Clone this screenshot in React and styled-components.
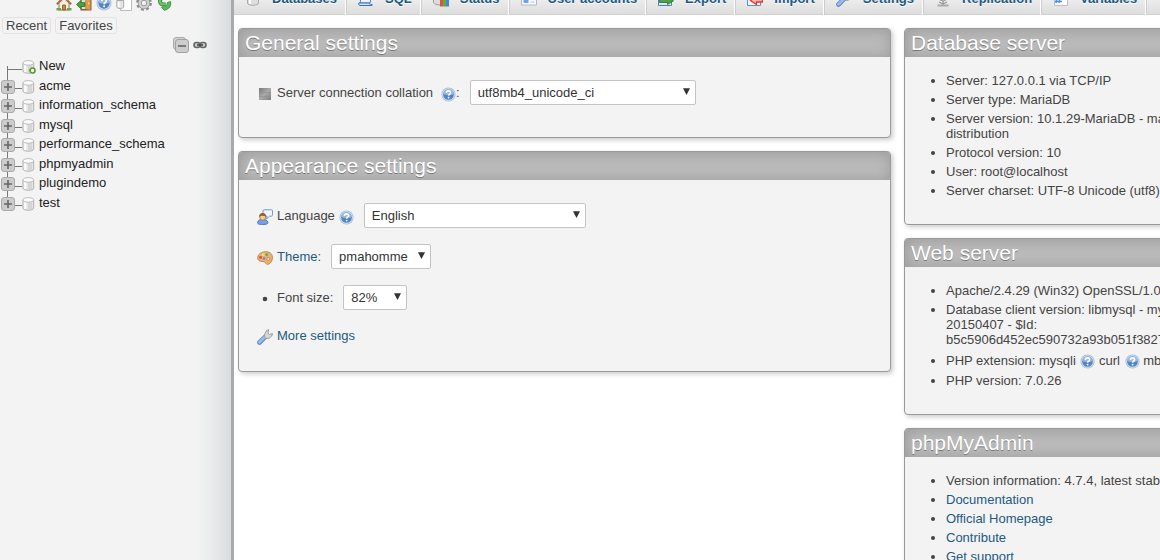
import React, { useState } from "react";
import styled, { createGlobalStyle } from "styled-components";

// ================= Global =================

const GlobalStyle = createGlobalStyle`
  * {
    box-sizing: border-box;
  }

  body {
    margin: 0;
    background: #fff;
    color: #444;
    font-family: "Liberation Sans", Arial, sans-serif;
    font-size: 13px;
    line-height: 15px;
  }

  a {
    color: #235a81;
    text-decoration: none;
  }

  a:hover {
    text-decoration: underline;
  }

  svg {
    display: block;
    flex: none;
  }
`;

// ================= Layout =================

const Page = styled.div`
  display: flex;
  height: 100vh;
  overflow: hidden;
`;

const Sidebar = styled.aside`
  flex: 0 0 234px;
  border-right: 3px solid #aaa;
  background: linear-gradient(to right, #f3f3f3 84%, #eeefef 89%, #e3e5e7 95%, #d9dbdd 100%);
`;

const Main = styled.main`
  flex: 1;
  min-width: 0;
  overflow: hidden;
`;

const Columns = styled.div`
  display: flex;
  gap: 13px;
  padding: 13px 0 0 4px;
`;

const SettingsColumn = styled.div`
  flex: 1;
  min-width: 0;
`;

/* The info panels run on past the right edge of the window */
const InfoColumn = styled.div`
  flex: 0 0 404px;
  margin-right: -148px;
`;

// ================= Sidebar =================

const IconBar = styled.div`
  display: flex;
  align-items: flex-end;
  gap: 4px;
  height: 11px;
  padding-left: 56px;
  overflow: hidden;
`;

const IconLink = styled.a`
  display: block;
`;

const QuickLists = styled.div`
  display: flex;
  gap: 4px;
  padding: 6px 0 0 2px;
`;

const QuickButton = styled.button`
  height: 17px;
  padding: 0 3px;
  border: 1px solid #e2e2e2;
  border-radius: 3px;
  background: #f3f3f3;
  color: #444;
  font: inherit;
  cursor: pointer;
`;

const TreeTools = styled.div`
  display: flex;
  justify-content: flex-end;
  align-items: center;
  gap: 4px;
  padding: 3px 24px 0 0;
`;

const PlainButton = styled.button`
  display: block;
  padding: 0;
  border: 0;
  background: none;
  cursor: pointer;
`;

const Tree = styled.ul`
  margin: 0;
  padding: 3px 0 0;
  list-style: none;
  line-height: 1.5;
`;

const TreeRow = styled.li`
  display: flex;
  align-items: center;
  background: linear-gradient(#777, #777) no-repeat 7px
    ${({ $first }) => ($first ? "100% / 1px 50%" : "0 / 1px 100%")};

  &:last-child {
    background-size: 1px 50%;
  }
`;

const Branch = styled.div`
  display: flex;
  align-items: center;
  justify-content: flex-end;
  width: 22px;
  padding-top: 3px;
`;

const Twig = styled.span`
  flex: 1;
  margin-top: 4px;
  margin-left: ${({ $first }) => ($first ? "7px" : "0")};
  border-top: 1px solid #777;
`;

const NodeIcon = styled.span`
  padding-top: 3px;
`;

const TreeLink = styled.a`
  margin-left: 3px;
  color: #222;
`;

// ================= Top menu =================

const TopMenu = styled.nav`
  display: flex;
  align-items: flex-end;
  height: 15px;
  overflow: hidden;
`;

const Tab = styled.a`
  display: flex;
  flex: none;
  align-items: center;
  gap: 11px;
  padding: 9px 8px 8px 11px;
  border-left: 1px solid #ccc;
  border-right: 1px solid #fff;
  background: linear-gradient(#fff, #dcdcdc);
  box-shadow: inset 0 -1px 0 #d2d2d2;
  font-weight: bold;
  line-height: 16px;
  text-shadow: 0 1px 0 #fff;
  white-space: nowrap;

  &:first-child {
    border-left: 0;
  }
`;

// ================= Panels =================

const Panel = styled.section`
  margin-bottom: 13px;
  border: 1px solid #999;
  border-radius: 4px;
  background: #f3f3f3;
  box-shadow: 2px 2px 5px #ccc;
`;

const PanelTitle = styled.h2`
  margin: 0;
  padding: 2px 6px;
  border-radius: 3px 3px 0 0;
  background: #bbb;
  box-shadow: 1px 1px 15px #999 inset;
  color: #fff;
  font-size: 21px;
  font-weight: normal;
  line-height: 24px;
  text-shadow: 0 1px 0 #777;
`;

const SettingsList = styled.ul`
  display: flex;
  flex-direction: column;
  gap: 16px;
  margin: 0;
  padding: ${({ $tall }) => ($tall ? "23px 18px 26px" : "23px 18px 32px")};
  list-style: none;
`;

const Setting = styled.li`
  display: flex;
  align-items: center;
  min-height: ${({ $plain }) => ($plain ? "18px" : "25px")};
`;

const SettingIcon = styled.span`
  display: flex;
  justify-content: center;
  width: 16px;
  margin-right: 4px;
  padding-top: 3px;
`;

const HelpLink = styled.a`
  display: ${({ $inline }) => ($inline ? "inline-block" : "block")};
  margin: ${({ $inline, $wide }) => ($inline ? "0 0 0 1px" : $wide ? "0 0 0 8px" : "0 0 0 4px")};
  padding-top: 3px;
  vertical-align: -4px;
`;

const SelectBox = styled.span`
  position: relative;
  width: ${({ $width }) => $width}px;
  margin-left: 10px;

  svg {
    position: absolute;
    top: 8px;
    right: 6px;
    pointer-events: none;
  }
`;

const Select = styled.select`
  display: block;
  width: 100%;
  height: 25px;
  padding: 0 18px 0 7px;
  border: 1px solid #c4c4c4;
  border-radius: 2px;
  appearance: none;
  background: #fff;
  color: #333;
  font: inherit;
`;

const InfoList = styled.ul`
  margin: 0;
  padding: 16px 12px 22px 41px;

  li {
    padding-bottom: 4px;
    overflow-wrap: break-word;
  }
`;

// ================= Icons =================

const HelpIcon = ({ size = 15 }) => (
  <svg width={size} height={size} viewBox="0 0 16 16">
    <circle cx="8" cy="8" r="7.500" fill="#9fbade" />
    <circle cx="8" cy="8" r="6.700" fill="#d3e0f0" />
    <circle cx="8" cy="8" r="5.700" fill="#5485c2" />
    <path d="M2.500 7.500a5.500 5.500 0 0 1 11 0c-3 1.500-8 1.500-11 0z" fill="#9ab8de" />
    <path d="M5.700 6.300c.2-3 4.800-2.800 4.500-.1C10 7.600 8.200 7.700 8.100 9.200" fill="none" stroke="#fff" strokeWidth="1.700" />
    <circle cx="8.100" cy="11.300" r="1" fill="#fff" />
  </svg>
);

const HomeIcon = () => (
  <svg width="16" height="16" viewBox="0 0 16 16">
    <path d="M3 7.500L8 3l5 4.500V15H3z" fill="#f4efe4" stroke="#8c7a60" />
    <path d="M.8 9.300L8 2.200l7.200 7.100" fill="none" stroke="#b06a40" strokeWidth="2" />
    <path d="M6.500 10h3v5h-3z" fill="#c9873f" stroke="#7d4b1c" strokeWidth=".7" />
    <path d="M.5 14.300h4.500M11 14.300h4.500" stroke="#6ba545" strokeWidth="2.600" />
  </svg>
);

const ExitIcon = () => (
  <svg width="16" height="16" viewBox="0 0 16 16">
    <path d="M4.500.5h11v15h-11z" fill="#8b5a2b" />
    <path d="M5.500 2h4v12h-4z" fill="#d8e2d0" />
    <path d="M9.500 2.500l5-1.500v14l-5-1z" fill="#dd9a50" />
    <circle cx="12.800" cy="8.500" r=".9" fill="#f7e27c" />
    <path d="M.5 9.500L5 5.500v2.200h4v3.800H5v2.300z" fill="#4ba046" stroke="#2d6e2c" strokeWidth=".8" />
  </svg>
);

const DocsIcon = () => (
  <svg width="16" height="16" viewBox="0 0 16 16">
    <path d="M4.500.5h11v15h-11z" fill="#fdfdfd" stroke="#bbb" />
    <path d="M.8 5.500h6.900v6.500c0 1.900-6.900 1.900-6.900 0z" fill="#e5e5e5" stroke="#aaa" />
    <path d="M2.700 7v5" stroke="#fff" strokeWidth="1.600" />
  </svg>
);

const GearIcon = () => (
  <svg width="16" height="16" viewBox="0 0 16 16">
    <circle cx="8" cy="8" r="6.500" fill="none" stroke="#8b8b8b" strokeWidth="2.800" strokeDasharray="2.700 2.400" />
    <circle cx="8" cy="8" r="4.200" fill="none" stroke="#8f8f8f" strokeWidth="4" />
    <circle cx="8" cy="8" r="4.200" fill="none" stroke="#cfcfcf" strokeWidth="2.600" />
  </svg>
);

const ReloadIcon = () => (
  <svg width="16" height="16" viewBox="0 0 16 16">
    <path d="M12 3C7 1.500 3.300 4 4 7s4 2.600 6 2.300" fill="none" stroke="#3c8f3d" strokeWidth="3.800" />
    <path d="M12 3C7 1.500 3.300 4 4 7s4 2.600 6 2.300" fill="none" stroke="#74c46c" strokeWidth="2" />
    <path d="M14.500 6.500c1 4-1 7.500-6 8.800L5.500 12.500 8 10.500l1 1.200c1.500-.7 2.300-2 2.200-4z" fill="#5fb85a" stroke="#3c8f3d" strokeWidth=".9" />
  </svg>
);

const CollapseIcon = () => (
  <svg width="16" height="16" viewBox="0 0 16 16">
    <rect x=".5" y=".5" width="12" height="12" rx="2.500" fill="#d2d2d2" stroke="#aaa" />
    <rect x="2.500" y="2.500" width="13" height="13" rx="2.500" fill="#ccc" stroke="#a2a2a2" />
    <path d="M5 9h8" stroke="#555" strokeWidth="1.400" />
  </svg>
);

const LinkIcon = () => (
  <svg width="14" height="16" viewBox="0 0 14 16">
    <rect x="1" y="5.500" width="6" height="5" rx="2.500" fill="#ccc" stroke="#666" strokeWidth="1.600" />
    <rect x="7" y="5.500" width="6" height="5" rx="2.500" fill="#ccc" stroke="#666" strokeWidth="1.600" />
    <path d="M4 8h6" stroke="#444" strokeWidth="1.600" />
  </svg>
);

const PlusIcon = () => (
  <svg width="15" height="14" viewBox="0 0 15 14">
    <rect x="1.500" y=".5" width="13" height="13" rx="2.500" fill="#ccc" stroke="#aaa" />
    <path d="M4 7h8M8 3v8" stroke="#666" strokeWidth="1.600" />
  </svg>
);

const DatabaseIcon = ({ isNew }) => (
  <svg width="14" height="14" viewBox="0 0 14 14">
    <path d="M.9 3v8c0 3 10.800 3 10.800 0V3" fill="#e4e4e4" stroke="#b4b4b4" />
    <path d="M3.300 5v7" stroke="#fff" strokeWidth="2" />
    <path d="M7 5.500v7M9 5.500v6.500" stroke="#c8c8c8" />
    <ellipse cx="6.300" cy="2.900" rx="5.400" ry="2.300" fill="#fafafa" stroke="#bbb" />
    {isNew && <circle cx="10.500" cy="10.500" r="2.500" fill="#fff" stroke="#579c34" strokeWidth="1.700" />}
  </svg>
);

const DatabasesIcon = () => (
  <svg width="16" height="16" viewBox="0 0 16 16">
    <path d="M2.500 3v9c0 3 11 3 11 0V3" fill="#dedede" stroke="#aaa" />
    <path d="M5 5v8" stroke="#fff" strokeWidth="2" />
    <ellipse cx="8" cy="3" rx="5.500" ry="2.300" fill="#fafafa" stroke="#b0b0b0" />
  </svg>
);

const SqlIcon = () => (
  <svg width="16" height="16" viewBox="0 0 16 16">
    <path d="M4.500 1h10l-2.500 11h-10z" fill="#eef4fc" stroke="#5680bd" />
    <path d="M.8 12h10.700c.5 2 1.500 2.500 2.500 1v1.500H2C1 14.500.5 13.500.8 12z" fill="#d5e4f7" stroke="#3f6fb4" />
    <path d="M6 5h6M5 8h6" stroke="#8aa9d6" />
  </svg>
);

const StatusIcon = () => (
  <svg width="16" height="16" viewBox="0 0 16 16">
    <path d="M.5 3v8.500c1 2 4 2.500 7 2.500V3z" fill="#ddd" stroke="#999" />
    <path d="M7 9h3v6.500H7z" fill="#e2533f" />
    <path d="M10 5h3v10.500h-3z" fill="#57b045" />
    <path d="M13 7h3v8.500h-3z" fill="#4b82d8" />
  </svg>
);

const UsersIcon = () => (
  <svg width="16" height="16" viewBox="0 0 16 16">
    <path d="M.5 3.500h15v10.500H.5z" fill="#f8fbff" stroke="#b0b8c4" />
    <path d="M2.500 7h5v5h-5z" fill="#6ea3e6" />
    <path d="M9.500 8h4M9.500 11h4" stroke="#b8c4d4" />
  </svg>
);

const ExportIcon = () => (
  <svg width="16" height="16" viewBox="0 0 16 16">
    <path d="M.5 2.500h13v12H.5z" fill="#dbe8f9" stroke="#4f7fc4" />
    <path d="M1.500 8.500h8V5.500l6 4.300-6 3.700v-2h-8z" fill="#4ca345" stroke="#276d2a" strokeWidth=".8" />
  </svg>
);

const ImportIcon = () => (
  <svg width="16" height="16" viewBox="0 0 16 16">
    <path d="M.5 3.500h13v11H.5z" fill="#f4f8fe" stroke="#5b8fd6" />
    <path d="M15.500 7v4H9.500v2.500l-6-4 6-4.500v2z" fill="#f8b3aa" stroke="#de3a32" strokeWidth="1.300" />
  </svg>
);

const WrenchIcon = () => (
  <svg width="16" height="16" viewBox="0 0 16 16">
    <path d="M2.500 13.500L8.700 7.300" stroke="#5e88c9" strokeWidth="4.600" strokeLinecap="round" />
    <path d="M2.500 13.300L8.500 7.300" stroke="#9cbcec" strokeWidth="2.800" strokeLinecap="round" />
    <path d="M7.800 8.300L7.500 5.300 9.500 1.500l2.200-.8-.7 3.600 1.500 1.200 3-1-.7 2.500-2.600 2.300-3.200.2z" fill="#d6d6d6" stroke="#999" strokeWidth=".9" />
  </svg>
);

const ReplicationIcon = () => (
  <svg width="16" height="16" viewBox="0 0 16 16">
    <circle cx="8" cy="6" r="4" fill="#ddd" stroke="#999" />
    <path d="M8 10v4M4 11l4 2 4-2" fill="none" stroke="#888" />
    <path d="M2.500 14.500h11" stroke="#aaa" strokeWidth="2" />
  </svg>
);

const VariablesIcon = () => (
  <svg width="16" height="16" viewBox="0 0 16 16">
    <path d="M1.500 1.500h13v13h-13z" fill="#fdfdff" stroke="#b9bec8" />
    <path d="M2 10.500h7M4 7l-1 5M7 7l-1 5" stroke="#5b8be0" strokeWidth="1.500" />
  </svg>
);

const MoreIcon = () => (
  <svg width="16" height="16" viewBox="0 0 16 16">
    <path d="M2 8h10v2L8 14H6L2 10z" fill="#333" />
  </svg>
);

const CollationIcon = () => (
  <svg width="12" height="12" viewBox="0 0 12 12">
    <defs>
      <linearGradient id="collation-fill" x2="1" y2="1">
        <stop offset="0" stopColor="#777" />
        <stop offset=".5" stopColor="#aaa" />
        <stop offset="1" stopColor="#7c7c7c" />
      </linearGradient>
    </defs>
    <rect width="12" height="12" fill="url(#collation-fill)" />
    <path d="M0 4.500h12M0 8.500h12" stroke="#8e8e8e" strokeWidth=".6" />
  </svg>
);

const LanguageIcon = () => (
  <svg width="16" height="16" viewBox="0 0 16 16">
    <path d="M7 .8h7.500c1 0 1 .5 1 1v4c0 1-.5 1.400-1.500 1.400h-1.500L9.500 10 10 7.200H7c-.5 0-1-.5-1-1V1.800c0-.7.500-1 1-1z" fill="#eef5fd" stroke="#6e99d3" />
    <path d="M.6 13.500c.4-2.500 2.400-3 5-3s5 .7 5.300 3c.1 1.500-1.500 2-5.200 2s-5.300-.5-5.100-2z" fill="#6fa4ea" stroke="#3564aa" strokeWidth=".8" />
    <ellipse cx="5.700" cy="8" rx="3" ry="3.200" fill="#f6cb98" stroke="#9a6330" strokeWidth=".7" />
    <path d="M2.200 8C1.500 2.800 9.200 2.800 9 7.200 6.500 7 4.500 6 2.200 8z" fill="#9a5a22" />
  </svg>
);

const ThemeIcon = () => (
  <svg width="16" height="16" viewBox="0 0 17 16">
    <path d="M.7 7.500C1.500 2.500 7 .6 11.500 1.500c4 .8 5.500 4.500 4.700 8-.6 3-3 5.500-5.200 5.200-1.800-.3-1.500-1.700-3-2.500C6 11.400 4 12 2.300 10.800 1 9.900.5 8.900.7 7.500z" fill="#e9b277" stroke="#b97b42" strokeWidth=".9" />
    <circle cx="3.800" cy="7.400" r="1.500" fill="#dd4a3a" />
    <circle cx="6.600" cy="4.500" r="1.500" fill="#f6df63" />
    <circle cx="10.300" cy="4.500" r="1.500" fill="#5cae58" />
    <circle cx="7.500" cy="8.500" r="1.400" fill="#5b8fdc" />
    <circle cx="12" cy="9" r="1.700" fill="#f7dfc0" stroke="#a86a34" strokeWidth=".6" />
  </svg>
);

const BulletIcon = () => (
  <svg width="6" height="6" viewBox="0 0 6 6">
    <circle cx="3" cy="3" r="2.300" fill="#444" />
  </svg>
);

const ArrowIcon = () => (
  <svg width="7" height="7" viewBox="0 0 7 7">
    <path d="M0 .3h7L3.500 7z" fill="#333" />
  </svg>
);

// ================= Data =================

const shortcuts = [
  { label: "Home", Icon: HomeIcon },
  { label: "Log out", Icon: ExitIcon },
  { label: "phpMyAdmin documentation", Icon: HelpIcon },
  { label: "Documentation", Icon: DocsIcon },
  { label: "Navigation panel settings", Icon: GearIcon },
  { label: "Reload navigation panel", Icon: ReloadIcon },
];

const databases = [
  "acme",
  "information_schema",
  "mysql",
  "performance_schema",
  "phpmyadmin",
  "plugindemo",
  "test",
];

const tabs = [
  { label: "Databases", Icon: DatabasesIcon },
  { label: "SQL", Icon: SqlIcon },
  { label: "Status", Icon: StatusIcon },
  { label: "User accounts", Icon: UsersIcon },
  { label: "Export", Icon: ExportIcon },
  { label: "Import", Icon: ImportIcon },
  { label: "Settings", Icon: WrenchIcon },
  { label: "Replication", Icon: ReplicationIcon },
  { label: "Variables", Icon: VariablesIcon },
  { label: "More", Icon: MoreIcon },
];

// ================= Parts =================

const Dropdown = ({ id, width, options, label }) => {
  const [value, setValue] = useState(options[0]);

  return (
    <SelectBox $width={width}>
      <Select id={id} aria-label={label} value={value} onChange={(e) => setValue(e.target.value)}>
        {options.map((option) => (
          <option key={option}>{option}</option>
        ))}
      </Select>
      <ArrowIcon />
    </SelectBox>
  );
};

const Help = ({ inline, wide }) => (
  <HelpLink href="#" aria-label="Documentation" $inline={inline} $wide={wide}>
    <HelpIcon />
  </HelpLink>
);

const Navigation = () => (
  <Sidebar>
    <IconBar>
      {shortcuts.map(({ label, Icon }) => (
        <IconLink key={label} href="#" aria-label={label}>
          <Icon size={16} />
        </IconLink>
      ))}
    </IconBar>
    <QuickLists>
      <QuickButton>Recent</QuickButton>
      <QuickButton>Favorites</QuickButton>
    </QuickLists>
    <TreeTools>
      <PlainButton aria-label="Collapse all">
        <CollapseIcon />
      </PlainButton>
      <PlainButton aria-label="Unlink from main panel">
        <LinkIcon />
      </PlainButton>
    </TreeTools>
    <Tree>
      <TreeRow $first>
        <Branch>
          <Twig $first />
        </Branch>
        <NodeIcon>
          <DatabaseIcon isNew />
        </NodeIcon>
        <TreeLink href="#">New</TreeLink>
      </TreeRow>
      {databases.map((name) => (
        <TreeRow key={name}>
          <Branch>
            <PlainButton aria-label={`Expand ${name}`}>
              <PlusIcon />
            </PlainButton>
            <Twig />
          </Branch>
          <NodeIcon>
            <DatabaseIcon />
          </NodeIcon>
          <TreeLink href="#">{name}</TreeLink>
        </TreeRow>
      ))}
    </Tree>
  </Sidebar>
);

// ================= Main Component =================

const App = () => (
  <Page>
    <GlobalStyle />
    <Navigation />
    <Main>
      <TopMenu>
        {tabs.map(({ label, Icon }) => (
          <Tab key={label} href="#">
            <Icon />
            {label}
          </Tab>
        ))}
      </TopMenu>
      <Columns>
        <SettingsColumn>
          <Panel>
            <PanelTitle>General settings</PanelTitle>
            <SettingsList>
              <Setting>
                <SettingIcon><CollationIcon /></SettingIcon>
                <label htmlFor="collation">Server connection collation</label>
                <Help wide />
                :
                <Dropdown
                  id="collation"
                  width={226}
                  options={["utf8mb4_unicode_ci", "utf8mb4_general_ci", "utf8_general_ci"]}
                />
              </Setting>
            </SettingsList>
          </Panel>

          <Panel>
            <PanelTitle>Appearance settings</PanelTitle>
            <SettingsList $tall>
              <Setting>
                <SettingIcon><LanguageIcon /></SettingIcon>
                <label htmlFor="language">Language</label>
                <Help />
                <Dropdown id="language" width={222} options={["English", "Deutsch", "Français"]} />
              </Setting>
              <Setting>
                <SettingIcon><ThemeIcon /></SettingIcon>
                <a href="#">Theme</a>:
                <Dropdown label="Theme" width={100} options={["pmahomme", "original"]} />
              </Setting>
              <Setting>
                <SettingIcon><BulletIcon /></SettingIcon>
                <label htmlFor="font-size">Font size:</label>
                <Dropdown id="font-size" width={64} options={["82%", "92%", "100%"]} />
              </Setting>
              <Setting $plain>
                <SettingIcon><WrenchIcon /></SettingIcon>
                <a href="#">More settings</a>
              </Setting>
            </SettingsList>
          </Panel>
        </SettingsColumn>

        <InfoColumn>
          <Panel>
            <PanelTitle>Database server</PanelTitle>
            <InfoList>
              <li>Server: 127.0.0.1 via TCP/IP</li>
              <li>Server type: MariaDB</li>
              <li>Server version: 10.1.29-MariaDB - mariadb.org binary distribution</li>
              <li>Protocol version: 10</li>
              <li>User: root@localhost</li>
              <li>Server charset: UTF-8 Unicode (utf8)</li>
            </InfoList>
          </Panel>

          <Panel>
            <PanelTitle>Web server</PanelTitle>
            <InfoList>
              <li>Apache/2.4.29 (Win32) OpenSSL/1.0.2l PHP/7.0.26</li>
              <li>
                Database client version: libmysql - mysqlnd 5.0.12-dev - 20150407 - $Id:
                b5c5906d452ec590732a93b051f3827e02749b83 $
              </li>
              <li>
                PHP extension: mysqli <Help inline /> curl <Help inline /> mbstring <Help inline />
              </li>
              <li>PHP version: 7.0.26</li>
            </InfoList>
          </Panel>

          <Panel>
            <PanelTitle>phpMyAdmin</PanelTitle>
            <InfoList>
              <li>Version information: 4.7.4, latest stable version: 4.7.6</li>
              <li><a href="#">Documentation</a></li>
              <li><a href="#">Official Homepage</a></li>
              <li><a href="#">Contribute</a></li>
              <li><a href="#">Get support</a></li>
            </InfoList>
          </Panel>
        </InfoColumn>
      </Columns>
    </Main>
  </Page>
);

export default App;
